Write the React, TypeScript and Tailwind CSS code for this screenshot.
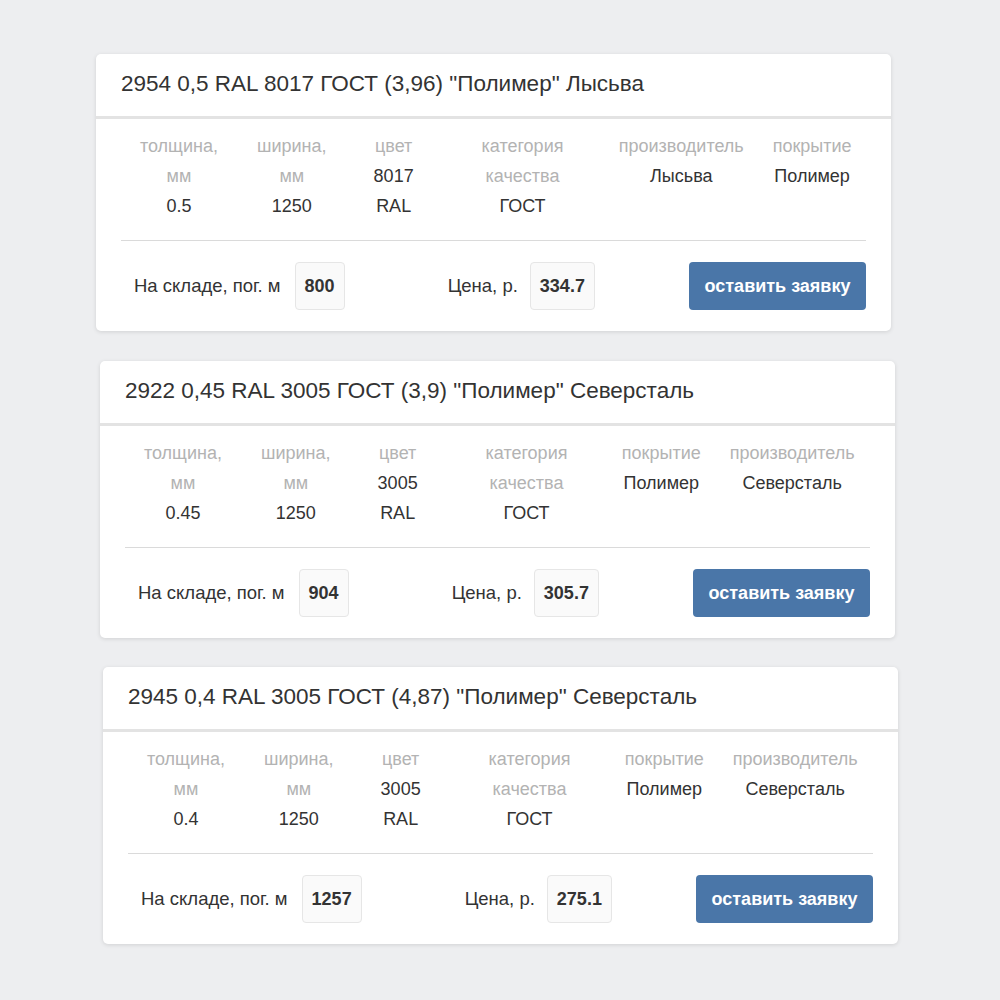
type Col = { label: string[]; value: string[]; w: number };

type Item = {
  title: string;
  stock: string;
  price: string;
  offset: string;
  cols: Col[];
};

const base: Col[] = [
  { label: ["толщина,", "мм"], value: [], w: 116 },
  { label: ["ширина,", "мм"], value: [], w: 110 },
  { label: ["цвет"], value: [], w: 94 },
  { label: ["категория", "качества"], value: ["ГОСТ"], w: 164 },
];

const items: Item[] = [
  {
    title: '2954 0,5 RAL 8017 ГОСТ (3,96) "Полимер" Лысьва',
    stock: "800",
    price: "334.7",
    offset: "ml-[96px] mt-[54px]",
    cols: [
      { ...base[0], value: ["0.5"] },
      { ...base[1], value: ["1250"] },
      { ...base[2], value: ["8017", "RAL"] },
      base[3],
      { label: ["производитель"], value: ["Лысьва"], w: 154 },
      { label: ["покрытие"], value: ["Полимер"], w: 108 },
    ],
  },
  {
    title: '2922 0,45 RAL 3005 ГОСТ (3,9) "Полимер" Северсталь',
    stock: "904",
    price: "305.7",
    offset: "ml-[100px] mt-[30px]",
    cols: [
      { ...base[0], value: ["0.45"] },
      { ...base[1], value: ["1250"] },
      { ...base[2], value: ["3005", "RAL"] },
      base[3],
      { label: ["покрытие"], value: ["Полимер"], w: 106 },
      { label: ["производитель"], value: ["Северсталь"], w: 156 },
    ],
  },
  {
    title: '2945 0,4 RAL 3005 ГОСТ (4,87) "Полимер" Северсталь',
    stock: "1257",
    price: "275.1",
    offset: "ml-[103px] mt-[29px]",
    cols: [
      { ...base[0], value: ["0.4"] },
      { ...base[1], value: ["1250"] },
      { ...base[2], value: ["3005", "RAL"] },
      base[3],
      { label: ["покрытие"], value: ["Полимер"], w: 106 },
      { label: ["производитель"], value: ["Северсталь"], w: 156 },
    ],
  },
];

function ValueBox({ children }: { children: string }) {
  return (
    <div className="h-[48px] px-[9px] flex items-center justify-center rounded-[4px] border border-[#e6e6e6] bg-[#fafafa] font-bold text-[18px] text-[#333]">
      {children}
    </div>
  );
}

function Card({ item }: { item: Item }) {
  return (
    <div
      className={`${item.offset} w-[795px] bg-white rounded-[5px] shadow-[0_1px_4px_rgba(0,0,0,0.12)]`}
    >
      <div className="h-[65px] flex items-center px-[25px] pb-[3px] text-[22.5px] text-[#333] border-b-[3px] border-[#e3e3e3]">
        {item.title}
      </div>
      <div className="px-[25px]">
        <div className="flex pt-[12px] pb-[19px] border-b border-[#dadada]">
          {item.cols.map((c, i) => (
            <div
              key={i}
              className="flex flex-col items-center text-[18px] leading-[30px]"
              style={{ width: c.w }}
            >
              {c.label.map((l) => (
                <span key={l} className="text-[#b3b3b3]">
                  {l}
                </span>
              ))}
              {c.value.map((v) => (
                <span key={v} className="text-[#333]">
                  {v}
                </span>
              ))}
            </div>
          ))}
        </div>
        <div className="flex items-center pt-[21px] pb-[21px] text-[18.5px] text-[#333]">
          <span className="ml-[13px] mr-[14px]">На складе, пог. м</span>
          <ValueBox>{item.stock}</ValueBox>
          <span className="ml-[103px] mr-[12px]">Цена, р.</span>
          <ValueBox>{item.price}</ValueBox>
          <button className="ml-auto h-[48px] w-[177px] rounded-[4px] bg-[#4a76a8] text-white font-bold text-[18px]">
            оставить заявку
          </button>
        </div>
      </div>
    </div>
  );
}

export default function App() {
  return (
    <div className="min-h-[1000px] w-[1000px] bg-[#edeef0] flex flex-col font-['Liberation_Sans',Arial,sans-serif]">
      {items.map((it) => (
        <Card key={it.title} item={it} />
      ))}
    </div>
  );
}
